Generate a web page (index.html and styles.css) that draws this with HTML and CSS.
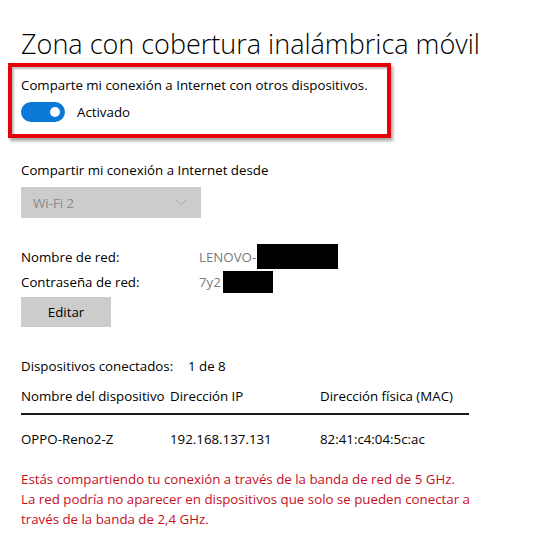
FILE: index.html
```html
<!DOCTYPE html>
<html lang="es">
<head>
<meta charset="utf-8">
<link rel="stylesheet" href="styles.css">
</head>
<body>
<main class="page">
  <h1 class="title">Zona con cobertura inalámbrica móvil</h1>
  <section class="highlight">
    <p class="label">Comparte mi conexión a Internet con otros dispositivos.</p>
    <div class="toggle-row">
      <span class="toggle"><span class="knob"></span></span>
      <span class="toggle-text">Activado</span>
    </div>
  </section>

  <p class="label from">Compartir mi conexión a Internet desde</p>
  <div class="select">
    <span>Wi-Fi 2</span>
    <svg class="chev" width="12" height="7" viewBox="0 0 12 7"><path d="M0.5 0.5 L6 6 L11.5 0.5" fill="none" stroke="#a8a8a8" stroke-width="1"/></svg>
  </div>

  <div class="net">
    <div class="net-row"><span class="k">Nombre de red:</span><span class="v">LENOVO-<span class="redact r1"></span></span></div>
    <div class="net-row"><span class="k">Contraseña de red:</span><span class="v">7y2<span class="redact r2"></span></span></div>
  </div>
  <button class="btn">Editar</button>

  <div class="devices"><span class="k2">Dispositivos conectados:</span><span>1 de 8</span></div>
  <div class="table">
    <div class="trow head"><span>Nombre del dispositivo</span><span>Dirección IP</span><span>Dirección física (MAC)</span></div>
    <div class="trow"><span>OPPO-Reno2-Z</span><span>192.168.137.131</span><span>82:41:c4:04:5c:ac</span></div>
  </div>
  <p class="warn">Estás compartiendo tu conexión a través de la banda de red de 5 GHz.<br>La red podría no aparecer en dispositivos que solo se pueden conectar a<br>través de la banda de 2,4 GHz.</p>
</main>
</body>
</html>
```

FILE: styles.css
```css
* { box-sizing: border-box; }
html, body { margin: 0; padding: 0; background: #fff; }
body {
  font-family: "Open Sans", "Noto Sans", sans-serif;
  font-size: 13.3px;
  color: #000;
  width: 550px;
  height: 547px;
  overflow: hidden;
}
.page { padding: 26px 0 0 21px; }
.title {
  margin: 0;
  font-weight: 300;
  font-size: 27px;
  line-height: 36px;
  color: #000;
}
p { margin: 0; }
.highlight {
  margin: 1px 0 0 -13px;
  width: 383px;
  height: 75px;
  border: 4px solid #e8000b;
  box-shadow: 2px 3px 3px rgba(0,0,0,0.35), inset 2px 2px 2px rgba(0,0,0,0.25);
  padding: 8px 0 0 9px;
}
.label { line-height: 20px; }
.toggle-row { display: flex; align-items: center; margin-top: 7px; gap: 12px; }
.toggle {
  width: 44px; height: 20px; border-radius: 10px;
  background: #0a78d7;
  display: flex; align-items: center; justify-content: flex-end;
  padding-right: 5px;
}
.knob { width: 10px; height: 10px; border-radius: 50%; background: #fff; }
.from { margin-top: 22px; }
.select {
  margin-top: 7px;
  width: 180px; height: 31px;
  background: #cccccc;
  display: flex; align-items: center; justify-content: space-between;
  padding: 0 14px 0 12px;
  color: #8a8a8a;
}
.net { margin-top: 26px; }
.net-row { display: flex; height: 25px; align-items: center; }
.k { width: 178px; }
.v { color: #7a7a7a; display: flex; align-items: center; }
.redact { display: inline-block; background: #000; }
.r1 { width: 81px; height: 25px; margin-left: 1px; }
.r2 { width: 50px; height: 22px; margin-left: 2px; }
.btn {
  display: block;
  margin-top: 3px;
  width: 90px; height: 30px;
  border: 0; background: #cccccc;
  font: inherit; color: #000;
}
.devices { display: flex; margin-top: 29px; line-height: 20px; }
.k2 { width: 167px; }
.table { margin-top: 10px; width: 448px; }
.trow { display: grid; grid-template-columns: 149px 150px 1fr; line-height: 20px; }
.trow.head { padding-bottom: 7px; border-bottom: 2px solid #1a1a1a; }
.trow:not(.head) { margin-top: 14px; }
.warn { margin-top: 20px; color: #c50f1f; line-height: 20px; }
```
